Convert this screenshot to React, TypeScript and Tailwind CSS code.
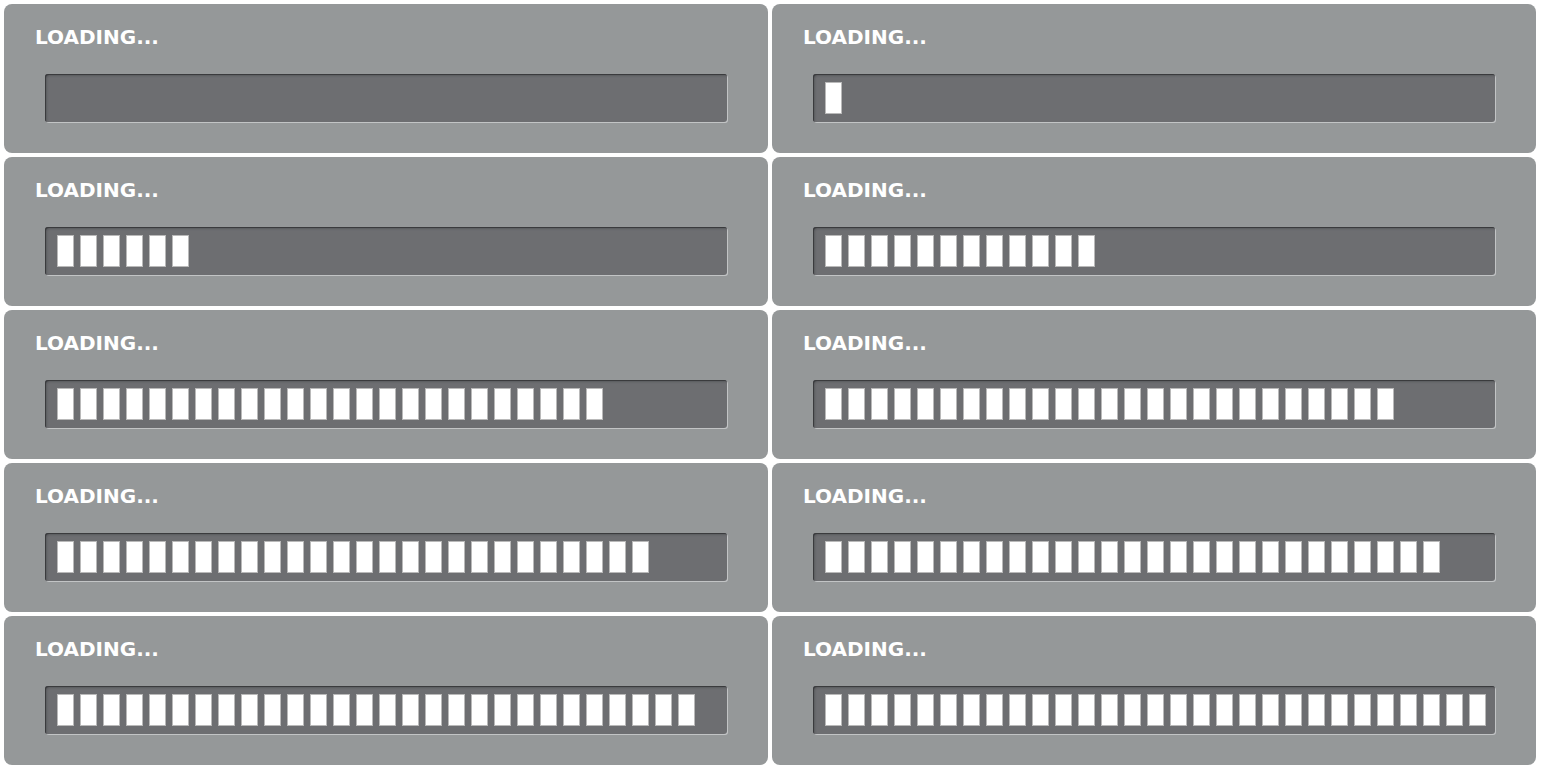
const COUNTS = [0, 1, 6, 12, 24, 25, 26, 27, 28, 29]

function ProgressBar({ filled }: { filled: number }) {
  return (
    <div className="mx-[41px] mt-[25px] flex h-[48px] items-center gap-[6px] rounded-[3px] bg-[#6d6e71] pl-[12px] shadow-[inset_1px_1px_0_#3a3b3d,inset_2px_2px_2px_#5a5b5e,1px_1px_0_#c2c4c5]">
      {Array.from({ length: filled }).map((_, i) => (
        <div key={i} className="h-[32px] w-[17px] shrink-0 border border-[#b9b9b9] bg-white" />
      ))}
    </div>
  )
}

function LoadingCard({ filled }: { filled: number }) {
  return (
    <div className="h-[149px] rounded-lg bg-[#959899] pt-[21px]">
      <p className="pl-[31px] text-[20px] leading-6 font-bold text-white [font-family:'DejaVu_Sans',Verdana,sans-serif]">
        LOADING...
      </p>
      <ProgressBar filled={filled} />
    </div>
  )
}

export default function App() {
  return (
    <div className="min-h-[773px] bg-white p-1">
      <div className="grid grid-cols-[764px_764px] gap-1">
        {COUNTS.map((n, i) => (
          <LoadingCard key={i} filled={n} />
        ))}
      </div>
    </div>
  )
}
